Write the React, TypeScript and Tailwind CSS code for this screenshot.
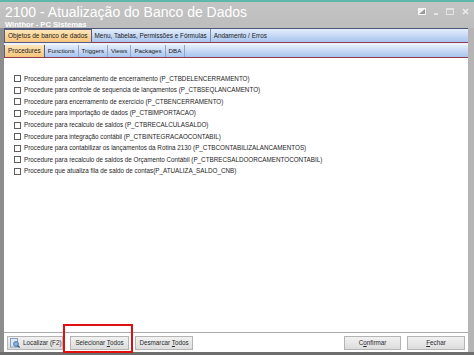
import React from "react";

const items = [
  "Procedure para cancelamento de encerramento (P_CTBDELENCERRAMENTO)",
  "Procedure para controle de sequencia de lançamentos (P_CTBSEQLANCAMENTO)",
  "Procedure para encerramento de exercício (P_CTBENCERRAMENTO)",
  "Procedure para importação de dados (P_CTBIMPORTACAO)",
  "Procedure para recalculo de saldos (P_CTBRECALCULASALDO)",
  "Procedure para integração contábil (P_CTBINTEGRACAOCONTABIL)",
  "Procedure para contabilizar os lançamentos da Rotina 2130 (P_CTBCONTABILIZALANCAMENTOS)",
  "Procedure para recalculo de saldos de Orçamento Contábil (P_CTBRECSALDOORCAMENTOCONTABIL)",
  "Procedure que atualiza fila de saldo de contas(P_ATUALIZA_SALDO_CNB)",
];

function Btn({ children, className = "" }: { children: React.ReactNode; className?: string }) {
  return (
    <div
      className={
        "h-[14px] flex items-center justify-center whitespace-nowrap border border-[#b4b4b4] bg-gradient-to-b from-[#f2f2f2] to-[#dcdcdc] text-[6.3px] text-[#2a2a2a] " +
        className
      }
    >
      {children}
    </div>
  );
}

export default function App() {
  return (
    <div className="w-[474px] h-[355px] overflow-hidden flex flex-col bg-[#c0c0c0] font-['Liberation_Sans',Arial,sans-serif]">
      <div className="h-[2px] bg-[#5db7ad]" />
      {/* Title */}
      <div className="h-[26px] relative px-[5px] bg-gradient-to-b from-[#c4c4c4] to-[#bdbdbd]">
        <div className="text-[14px] leading-none text-white pt-[3px] whitespace-nowrap">2100 - Atualização do Banco de Dados</div>
        <div className="text-[7.6px] leading-none font-bold text-white mt-[2px] whitespace-nowrap">Winthor - PC Sistemas</div>
        <div className="absolute right-[5px] top-[6px] flex items-end gap-[8px]">
          <svg width="8" height="7" viewBox="0 0 8 7">
            <rect x="0" y="0" width="8" height="7" fill="#f4f4f4" />
            <path d="M1 6 L7 1 L7 6 Z" fill="#9a9a9a" />
          </svg>
          <div className="w-[4px] h-[1.5px] bg-[#e6e6e6] mb-[0.5px]" />
          <svg width="8" height="7" viewBox="0 0 8 7">
            <rect x="0.5" y="0.5" width="7" height="6" fill="none" stroke="#e2e2e2" strokeWidth="1" />
            <rect x="0.5" y="0.5" width="7" height="1.5" fill="#e2e2e2" />
          </svg>
          <svg width="7" height="7" viewBox="0 0 7 7">
            <path d="M1 1 L6 6 M6 1 L1 6" stroke="#ececec" strokeWidth="1.6" />
          </svg>
        </div>
      </div>
      {/* Body frame */}
      <div className="flex-1 flex flex-col border-l-[4px] border-l-[#8d8d8d] border-r-[6px] border-r-[#b5b5b5] bg-white">
        {/* Outer tabs */}
        <div className="h-[15px] flex items-stretch border-t border-t-[#4a5676] border-b border-b-[#8e3c4e] bg-gradient-to-b from-[#e4eefc] to-[#a8c4ee]">
          <div className="px-[3px] flex items-center text-[6.5px] text-[#1a1a1a] bg-gradient-to-b from-[#fde6b8] to-[#f7c57a] border border-[#5a5a86] -mb-[1px] whitespace-nowrap">
            Objetos de banco de dados
          </div>
          <div className="px-[3px] flex items-center text-[6.4px] text-[#1a1a1a] border-r border-r-[#7d8cab] whitespace-nowrap">
            Menu, Tabelas, Permissões e Fórmulas
          </div>
          <div className="px-[3px] flex items-center text-[6.4px] text-[#1a1a1a] whitespace-nowrap">Andamento / Erros</div>
        </div>
        <div className="h-[2px] bg-[#eef3fb]" />
        {/* Inner tabs */}
        <div className="h-[13px] flex items-stretch border-b border-b-[#8e3c4e] bg-gradient-to-b from-[#e4eefc] to-[#a8c4ee]">
          <div className="px-[3px] flex items-center text-[6.4px] text-[#1a1a1a] bg-gradient-to-b from-[#fde6b8] to-[#f7c57a] border-x border-[#5a5a86]">
            Procedures
          </div>
          {["Functions", "Triggers", "Views", "Packages", "DBA"].map((t) => (
            <div key={t} className="px-[3px] flex items-center text-[6.2px] text-[#1a1a1a] border-r border-r-[#95a4c2]">
              {t}
            </div>
          ))}
        </div>
        {/* Content */}
        <div className="flex-1 pt-[15px] pl-[10px]">
          {items.map((t) => (
            <div key={t} className="h-[11.6px] flex items-center gap-[3px]">
              <div className="w-[7px] h-[7px] border border-[#5e5e5e] bg-white" />
              <span className="text-[6.3px] text-[#1e1e1e] leading-none whitespace-nowrap">{t}</span>
            </div>
          ))}
        </div>
        {/* Bottom buttons */}
        <div className="h-[20px] border-t border-t-[#a9a9a9] flex items-center px-[3px] bg-white">
          <Btn className="w-[56px] gap-[3px] justify-start pl-[2px]">
            <svg width="10" height="10" viewBox="0 0 10 10">
              <rect x="0.5" y="0.5" width="7" height="8.5" fill="#dfe9f5" stroke="#6f8fb6" strokeWidth="0.8" />
              <circle cx="6" cy="6" r="2.4" fill="#8fb4dd" stroke="#3d6aa0" strokeWidth="0.9" />
              <path d="M7.6 7.6 L9.6 9.6" stroke="#2e4f7c" strokeWidth="1.3" />
            </svg>
            <span>Localizar (F2)</span>
          </Btn>
          <div className="relative ml-[7px]">
            <Btn className="w-[59px]">
              <span>
                Selecionar <span className="underline">T</span>odos
              </span>
            </Btn>
            <div className="absolute left-[-7px] right-[-4px] top-[-12px] bottom-[-3px] border-[2px] border-[#e01010]" />
          </div>
          <Btn className="w-[58px] ml-[6px]">
            <span>
              Desmarcar <span className="underline">T</span>odos
            </span>
          </Btn>
          <div className="flex-1" />
          <Btn className="w-[57px]">
            <span>
              C<span className="underline">o</span>nfirmar
            </span>
          </Btn>
          <Btn className="w-[58px] ml-[6px]">
            <span>
              <span className="underline">F</span>echar
            </span>
          </Btn>
        </div>
      </div>
      <div className="h-[3px] bg-[#6e6e6e]" />
    </div>
  );
}
